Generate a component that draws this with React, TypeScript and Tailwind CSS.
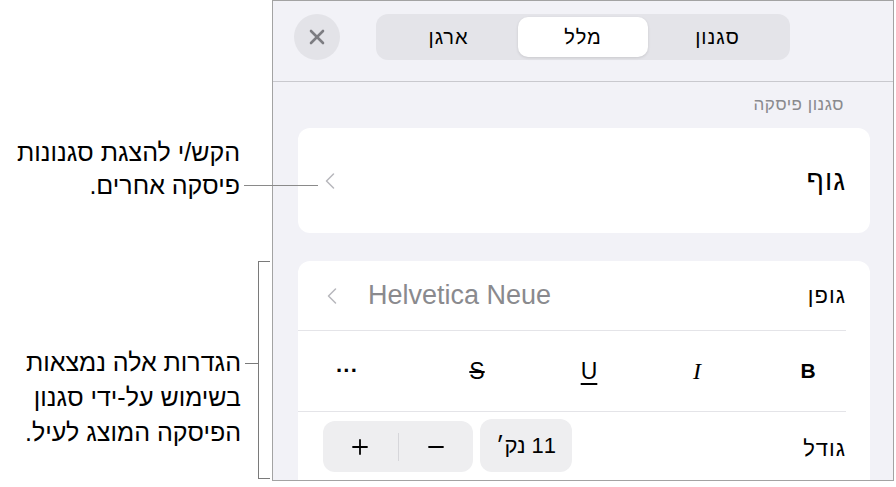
import { X, ChevronLeft, Plus, Minus } from "lucide-react";

const heb = { fontFamily: '"Liberation Sans", "DejaVu Sans", sans-serif' };
const latin = { fontFamily: '"Liberation Sans", sans-serif' };

function Header() {
  return (
    <div className="h-[81px] shrink-0 border-b border-[#c9c9ce] flex items-start pt-[13px] pl-[21px]">
      <div className="w-[46px] h-[46px] rounded-full bg-[#e3e3e8] flex items-center justify-center">
        <X size={24} strokeWidth={2.6} className="text-[#7d7d82]" />
      </div>
      <div className="ml-[36px] w-[414px] h-[46px] rounded-[12px] bg-[#e4e4e9] p-[3px] flex text-[20px] tracking-[1px] text-black" dir="rtl">
        <div className="flex-1 flex items-center justify-center">סגנון</div>
        <div className="w-[130px] rounded-[10px] bg-white shadow-[0_1px_3px_rgba(0,0,0,0.12)] flex items-center justify-center font-medium">
          מלל
        </div>
        <div className="flex-1 flex items-center justify-center">ארגן</div>
      </div>
    </div>
  );
}

function StyleCard() {
  return (
    <div className="ml-[25px] mr-[23px] h-[105px] rounded-[12px] bg-white flex items-center justify-between pl-[18px] pr-[24px]">
      <ChevronLeft size={28} strokeWidth={1.3} className="text-[#b8b8bd]" />
      <span dir="rtl" className="text-[28px] tracking-[1px] font-medium text-black">גוף</span>
    </div>
  );
}

function FontCard() {
  return (
    <div className="ml-[25px] mr-[23px] rounded-t-[12px] bg-white flex-1 flex flex-col">
      <div className="h-[70px] flex items-center pl-[20px] border-b border-[#e4e4e8] mr-[24px]">
        <ChevronLeft size={28} strokeWidth={1.3} className="text-[#b8b8bd]" />
        <span className="ml-[22px] text-[27px] text-[#8a8a8e]" style={latin}>
          Helvetica Neue
        </span>
        <span dir="rtl" className="ml-auto text-[22px] tracking-[1px] text-black">גופן</span>
      </div>
      <div className="h-[81px] flex items-center border-b border-[#e4e4e8] mr-[24px] text-black" style={latin}>
        <div className="ml-[29px] w-10 flex justify-center text-[22px] font-bold leading-none">···</div>
        <div className="ml-[90px] w-10 flex justify-center text-[23px] line-through decoration-[1.5px]">S</div>
        <div className="ml-[72px] w-10 flex justify-center text-[23px] underline underline-offset-[4px] decoration-[1.5px]">U</div>
        <div className="ml-[68px] w-10 flex justify-center text-[24px] italic" style={{ fontFamily: '"Liberation Serif", serif' }}>I</div>
        <div className="ml-[71px] w-10 flex justify-center text-[21px] font-bold">B</div>
      </div>
      <div className="flex-1 flex items-start pt-[9px] pl-[25px] pr-[24px]">
        <div className="w-[150px] h-[51px] rounded-[12px] bg-[#eeeef0] flex items-center">
          <div className="flex-1 flex justify-center">
            <Plus size={24} strokeWidth={1.8} className="text-black" />
          </div>
          <div className="w-px h-[28px] bg-[#d6d6da]" />
          <div className="flex-1 flex justify-center">
            <Minus size={24} strokeWidth={1.8} className="text-black" />
          </div>
        </div>
        <div dir="rtl" className="ml-[7px] w-[92px] h-[53px] -mt-[2px] rounded-[12px] bg-[#eeeef0] flex items-center justify-center text-[22px] text-black">
          11 נק׳
        </div>
        <span dir="rtl" className="ml-auto mt-[11px] text-[22px] tracking-[1px] text-black">גודל</span>
      </div>
    </div>
  );
}

function Panel() {
  return (
    <div className="w-[622px] h-[481px] border border-[#a3a3a3] bg-[#f2f2f7] flex flex-col overflow-hidden" style={heb}>
      <Header />
      <div dir="rtl" className="h-[46px] shrink-0 flex items-center pr-[49px] text-[17px] tracking-[0.5px] text-[#8a8a8e]">
        סגנון פיסקה
      </div>
      <StyleCard />
      <div className="h-[28px] shrink-0" />
      <FontCard />
    </div>
  );
}

export default function App() {
  return (
    <div className="relative w-[896px] h-[487px] bg-white flex overflow-hidden" style={heb}>
      <div className="w-[272px] shrink-0 flex flex-col items-end text-[25px] leading-[33px] text-black">
        <p dir="rtl" className="mt-[136px] mr-[32px] text-right whitespace-nowrap">
          הקש/י להצגת סגנונות
          <br />
          פיסקה אחרים.
        </p>
        <div className="mt-[59px] flex items-start">
          <p dir="rtl" className="mt-[84px] text-right leading-[35px] whitespace-nowrap">
            הגדרות אלה נמצאות
            <br />
            בשימוש על-ידי סגנון
            <br />
            הפיסקה המוצג לעיל.
          </p>
          <div className="mt-[102px] ml-[4px] w-[13px] h-px bg-[#7a7a7a]" />
          <div className="w-[12px] h-[218px] border-l border-t border-b border-[#7a7a7a]" />
          <div className="w-[2px]" />
        </div>
      </div>
      <Panel />
      {/* leader line for the style card */}
      <div className="absolute left-[244px] top-[185px] w-[74px] h-px bg-[#8a8a8a]" />
    </div>
  );
}
